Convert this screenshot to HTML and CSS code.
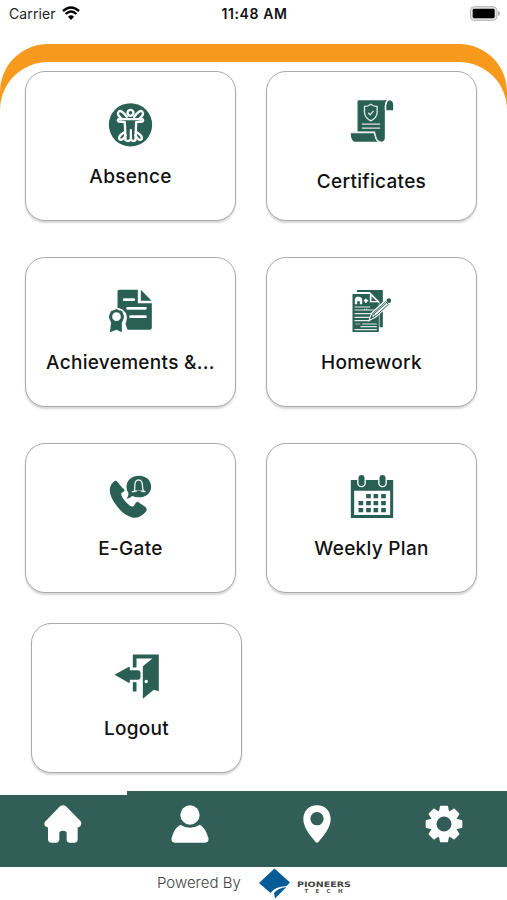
FILE: index.html
```html
<!DOCTYPE html>
<html lang="en">

<head>
    <meta charset="UTF-8">
    <title>Home</title>
    <meta name="viewport" content="width=device-width, initial-scale=1.0">
    <link rel="stylesheet" href="styles.css">
</head>

<body>

    <!-- Status bar -->
    <div class="status-bar">
        <div class="carrier">
            <span>Carrier</span>
            <svg class="wifi" viewBox="0 0 54 42">
                <path d="M3 15Q27-6 51 15" fill="none" stroke="#000" stroke-width="7" />
                <path d="M11 24Q27 9 43 24" fill="none" stroke="#000" stroke-width="7" />
                <path d="M18 32Q27 24 36 32L27 42Z" />
            </svg>
        </div>
        <span class="time">11:48 AM</span>
        <svg class="battery" viewBox="0 0 90 44">
            <rect x="1.5" y="1.5" width="79" height="41" rx="11" fill="#e4e4e4" stroke="#b4b4b4" stroke-width="3" />
            <rect x="8" y="8" width="66" height="28" rx="4" />
            <path d="M84 14q6 3 6 8t-6 8z" fill="#aaa" />
        </svg>
    </div>

    <!-- Menu -->
    <main class="panel">
        <div class="panel-inner">
            <div class="grid">
                <a class="card">
                    <svg class="icon" viewBox="55.5 40.5 132 132">
                        <circle cx="120" cy="106" r="65" />
                        <g fill="none" stroke="#fff" stroke-width="7" stroke-linecap="round" stroke-linejoin="round">
                            <circle cx="120" cy="70" r="9" />
                            <path d="M109 82Q92 59 85 66Q77 74 92 86M131 82Q148 59 155 66Q163 74 148 86" />
                            <path d="M84 89H156Q160 92 156 96L137 98L135 152Q128 158 121 150V122V150Q113 158 105 152L103 98L84 96Q80 92 84 89Z" />
                            <path d="M104 127Q84 137 86 148Q94 158 106 137M136 127Q156 137 154 148Q146 158 134 137" />
                        </g>
                    </svg>
                    <span class="label">Absence</span>
                </a>
                <a class="card card-raised">
                    <svg class="icon" viewBox="148.5 25.5 132 132">
                        <path d="M174 29H260Q253 36 253 46V143Q252 153 241 154Q231 154 227 142L222 124H171V35Q171 29 174 29Z" />
                        <path d="M257 59V42Q258 30 267 29Q278 31 278 43V59Z" />
                        <path d="M151 128H220L225 145Q227 150 232 154H164Q151 152 151 128Z" />
                        <path d="M255 59V45Q256 34 263 28" fill="none" stroke="#fff" stroke-width="4" />
                        <g fill="none" stroke="#d9e7e4" stroke-width="4">
                            <path d="M151 125H222L226 141Q229 153 240 154" />
                            <path d="M211 41Q220 48 230 48V66Q229 82 211 91Q193 82 192 66V48Q202 48 211 41Z" />
                            <path d="M203 67L209 73L219 61" />
                            <path d="M184 101H239M184 113H239" />
                        </g>
                    </svg>
                    <span class="label">Certificates</span>
                </a>
                <a class="card">
                    <svg class="icon" viewBox="205.5 42 132 132">
                        <path d="M237 44H292V85H334V158Q334 164 328 164H261L255 146Q263 128 256 114Q248 101 231 98V50Q231 44 237 44Z" />
                        <path d="M301 44L333 77H301Z" />
                        <path d="M251 74H280M261 100H315M270 125H315" fill="none" stroke="#fff" stroke-width="8" stroke-linecap="round" />
                        <path d="M228 102L236 106L245 108L248 117L251 125L248 134L244 143V172L228 164L208 172L212 143L208 134L205 125L208 116L212 108L220 106Z" />
                        <circle cx="228" cy="125" r="13" fill="#fff" />
                    </svg>
                    <span class="label">Achievements &amp;...</span>
                </a>
                <a class="card">
                    <svg class="icon" viewBox="118.5 42 132 132">
                        <path d="M139 45H217V157H207V80L178 51H139Z" />
                        <path d="M126 57H178L205 84V171H126Z" />
                        <path d="M178 56V82H205Z" fill="#fff" />
                        <path d="M183 64V78H198Z" />
                        <path d="M133 88V72Q135 64 143 65Q153 64 155 73V88H148V79H140V88Z" fill="#fff" />
                        <path d="M160 77H173M166 71V84" stroke="#fff" stroke-width="5" />
                        <path d="M132 96H179M132 105H198M132 116H187M132 127H179M132 137H178M155 147H199M150 155H199M132 164H199" stroke="#dfebe8" stroke-width="3.5" />
                        <path d="M161 103H174M135 147H149" stroke="#fff" stroke-width="3" stroke-dasharray="3 3" />
                        <path d="M178 134L185 114L229 74L239 84L196 124Z" fill="#fff" stroke="#fff" stroke-width="6" />
                        <path d="M180 131L187 115L226 80L234 88L195 123ZM190 117L228 84M187 115L195 123" fill="#fff" stroke="#2a6054" stroke-width="3" />
                        <path d="M179 132L184 122L189 127Z" />
                        <circle cx="235" cy="77" r="7" />
                    </svg>
                    <span class="label">Homework</span>
                </a>
                <a class="card">
                    <svg class="icon" viewBox="85.5 30 132 132">
                        <path d="M101 49Q105 45 109 49L126 69Q135 73 131 79L122 85Q121 95 139 114Q149 126 159 124L166 113Q171 108 176 113L196 127Q201 133 196 140Q178 161 157 158Q128 152 103 115Q82 83 90 64Q94 55 101 49Z" />
                        <path d="M175 32C199 32 212 47 212 65C212 84 196 97 174 97Q164 97 155 93Q148 101 138 101Q145 94 144 85Q137 76 138 64C139 45 154 32 175 32Z" />
                        <path d="M161 78Q163 74 163 63Q163 45 174 45Q186 45 186 63Q186 74 190 78ZM154 80H164M185 80H195" fill="none" stroke="#e8f1ee" stroke-width="4" stroke-linejoin="round" />
                        <path d="M169 79H181" stroke="#2a6054" stroke-width="5" />
                    </svg>
                    <span class="label">E-Gate</span>
                </a>
                <a class="card">
                    <svg class="icon" viewBox="148.5 30 132 132">
                        <path d="M151 45H278V159H151Z" />
                        <path d="M161 77H269V150H161Z" fill="#fff" />
                        <rect x="170" y="26" width="26" height="41" rx="13" fill="#fff" />
                        <rect x="233" y="26" width="26" height="41" rx="13" fill="#fff" />
                        <rect x="174" y="30" width="18" height="33" rx="9" />
                        <rect x="237" y="30" width="18" height="33" rx="9" />
                        <path d="M197 87h14v13h-14zM219 87h14v13h-14zM242 87h14v13h-14zM174 108h14v13h-14zM197 108h14v13h-14zM219 108h14v13h-14zM242 108h14v13h-14zM174 129h14v13h-14zM197 129h14v13h-14zM219 129h14v13h-14zM242 129h14v13h-14z" />
                    </svg>
                    <span class="label">Weekly Plan</span>
                </a>
                <a class="card card-logout">
                    <svg class="icon" viewBox="283.5 133.5 132 132">
                        <path d="M337 132H415V242L400 238L367 265V167L396 144H348V171H337Z" />
                        <path d="M337 215H348V243H337Z" />
                        <path d="M282 193L325 169Q328 169 328 173V179H353Q360 180 360 187V200Q360 207 353 208H328V214Q328 219 323 216Z" />
                        <circle cx="377" cy="213" r="5" fill="#fff" />
                    </svg>
                    <span class="label">Logout</span>
                </a>
            </div>
        </div>
    </main>

    <!-- Bottom tabs -->
    <nav class="tabs">
        <a class="tab active">
            <svg viewBox="136 76 114 114">
                <path d="M184 80Q193 73 202 80L246 125Q252 136 240 143H237V180Q236 189 227 189H211Q204 188 204 181V160Q203 153 193 153Q183 153 182 160V181Q181 188 174 189H158Q149 188 148 180V143H145Q133 137 139 126Z" />
            </svg>
        </a>
        <a class="tab">
            <svg viewBox="515 76 114 114">
                <circle cx="572" cy="106" r="29" />
                <path d="M543 135Q556 144 572 144Q588 144 602 135Q619 146 627 174Q630 188 617 189H527Q514 188 517 174Q524 146 543 135Z" />
            </svg>
        </a>
        <a class="tab">
            <svg viewBox="133 76 114 114">
                <path fill-rule="evenodd" d="M190 77C215 77 231 95 231 119C231 142 212 167 195 186Q190 191 185 186C168 167 149 142 149 119C149 95 165 77 190 77ZM190 97A20 20 0 1 0 190 137A20 20 0 1 0 190 97Z" />
            </svg>
        </a>
        <a class="tab">
            <svg viewBox="-57 -57 114 114">
                <g stroke="#fff" stroke-width="4" stroke-linejoin="round">
                    <path id="tooth" d="M-14-34L-10-53H10L14-34Z" />
                    <use href="#tooth" transform="rotate(45)" />
                    <use href="#tooth" transform="rotate(90)" />
                    <use href="#tooth" transform="rotate(135)" />
                    <use href="#tooth" transform="rotate(180)" />
                    <use href="#tooth" transform="rotate(225)" />
                    <use href="#tooth" transform="rotate(270)" />
                    <use href="#tooth" transform="rotate(315)" />
                </g>
                <circle r="32" fill="none" stroke="#fff" stroke-width="19" />
            </svg>
        </a>
    </nav>

    <footer class="footer">
        <span class="powered">Powered By</span>
        <svg class="logo" viewBox="0 0 93 33">
            <path d="M15.500 1.500L31 15.500L27.500 19Q16 19.500 11.500 26L0 16Z" fill="#075b96" />
            <path d="M27.500 20L16 31.500L15 26Q19 21 27.500 20Z" fill="#075b96" />
            <text x="38" y="19.500" class="logo-name" textLength="54" lengthAdjust="spacingAndGlyphs">PIONEERS</text>
            <text x="45.500" y="25.500" class="logo-sub" textLength="38">TECH</text>
        </svg>
    </footer>

</body>

</html>
```
FILE: styles.css
```css
* {
    box-sizing: border-box;
}

body {
    margin: 0;
    height: 900px;
    display: flex;
    flex-direction: column;
    overflow: hidden;
    background-color: #fff;
    font-family: Inter, "Liberation Sans", sans-serif;
    color: #111;
}

/* status bar */
.status-bar {
    height: 44px;
    padding: 5px 7px 0 9px;
    display: grid;
    grid-template-columns: 1fr auto 1fr;
    align-items: start;
    font-size: 14px;
    line-height: 18px;
}

.carrier {
    display: flex;
    gap: 6px;
}

.carrier span {
    width: 47px;
    letter-spacing: 0.1px;
    color: #222;
}

.wifi {
    width: 18px;
    height: 14px;
    margin-top: 1px;
}

.time {
    font-weight: 600;
    font-size: 14px;
    letter-spacing: 0.6px;
}

.battery {
    width: 30px;
    height: 15px;
    margin-top: 1px;
    justify-self: end;
}

/* menu */
.panel {
    height: 746.5px;
    padding-top: 18px;
    background-color: #f7991c;
    border-radius: 48px 48px 0 0;
}

.panel-inner {
    height: 728.5px;
    padding: 9px 30px 0 24.5px;
    background-color: #fff;
    border-radius: 48px 48px 0 0;
}

.grid {
    display: grid;
    grid-template-columns: 211px 211px;
    column-gap: 30px;
    row-gap: 36px;
}

.card {
    height: 150px;
    padding: 31px 0 0 1px;
    display: flex;
    flex-direction: column;
    align-items: center;
    background-color: #fff;
    border: 1px solid #aaa;
    border-radius: 20px;
    box-shadow: 0 2px 2px rgba(0, 0, 0, 0.16);
}

.card-raised {
    padding-top: 26.5px;
}

.card-logout {
    margin: -6px 0 0 6px;
    width: 211px;
}

.icon {
    width: 44px;
    height: 44px;
    flex: none;
    overflow: visible;
    fill: #2a6054;
}

.label {
    margin-top: 17px;
    font-size: 19px;
    line-height: 26px;
    font-weight: 500;
    letter-spacing: 0.3px;
    white-space: nowrap;
}

.card-raised .label {
    margin-top: 26.5px;
}

/* tabs */
.tabs {
    height: 76.5px;
    display: grid;
    grid-template-columns: repeat(4, 1fr);
    background-color: #315e56;
}

.tab {
    display: flex;
    justify-content: center;
    padding-top: 10.5px;
    border-top: 4.5px solid transparent;
}

.tab.active {
    border-top-color: #fff;
}

.tab svg {
    width: 38px;
    height: 38px;
    fill: #fff;
}

/* footer */
.footer {
    height: 33px;
    padding-left: 157px;
    display: flex;
    align-items: center;
    gap: 17px;
}

.powered {
    width: 85px;
    margin-top: -2px;
    font-size: 15px;
    font-weight: 300;
    color: #444;
    white-space: nowrap;
}

.logo {
    width: 93px;
    height: 33px;
}

.logo-name {
    font: bold 7.5px "DejaVu Sans", sans-serif;
    fill: #444;
}

.logo-sub {
    font: bold 5.5px "DejaVu Sans", sans-serif;
    fill: #555;
}
```
